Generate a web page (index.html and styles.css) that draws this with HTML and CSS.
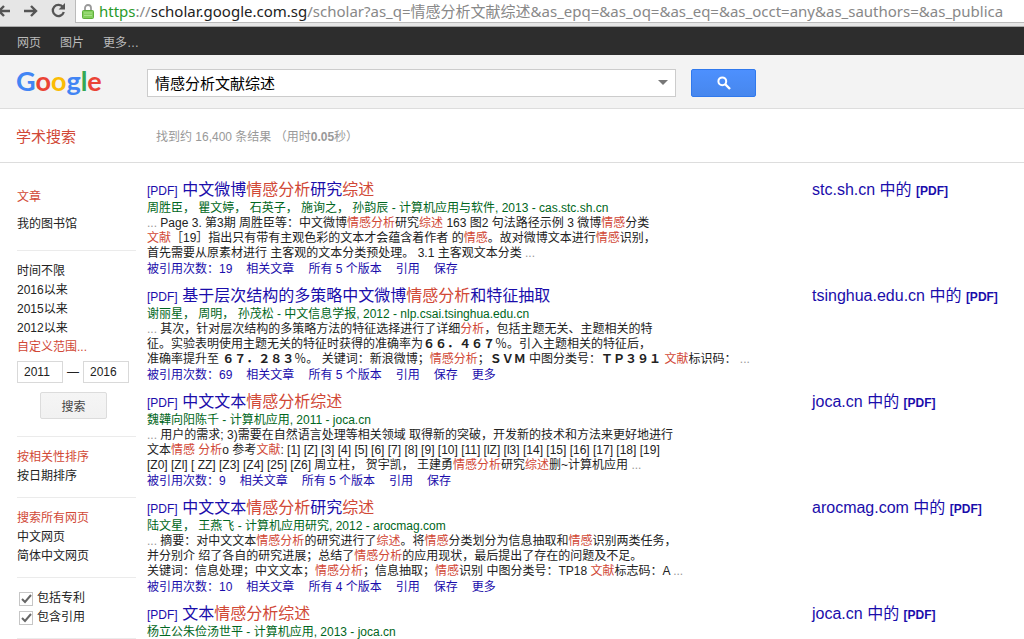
FILE: index.html
```
<!DOCTYPE html>
<html lang="zh-CN">
<head>
<meta charset="UTF-8">
<title>情感分析文献综述 - Google 学术搜索</title>
<link rel="stylesheet" href="styles.css">
</head>
<body>

<div class="browser">
    <button class="nav-btn back" aria-label="后退">
        <svg width="14" height="14" viewBox="0 0 14 14"><path d="M13 7H2M7 2L2 7l5 5" fill="none" stroke="#555" stroke-width="2.4"/></svg>
    </button>
    <button class="nav-btn" aria-label="前进">
        <svg width="14" height="14" viewBox="0 0 14 14"><path d="M0 7h12M7 2l5 5-5 5" fill="none" stroke="#555" stroke-width="2.4"/></svg>
    </button>
    <button class="nav-btn" aria-label="刷新">
        <svg width="15" height="15" viewBox="0 0 15 15"><path d="M12 4.2A5.6 5.6 0 1 0 12.8 9" fill="none" stroke="#555" stroke-width="2.3"/><path d="M14 0v6.6H7.6z" fill="#555"/></svg>
    </button>
    <div class="address">
        <svg class="lock" width="12" height="15" viewBox="0 0 12 15"><path d="M3 7V4a3 3 0 0 1 6 0v3" fill="none" stroke="#999" stroke-width="1.8"/><rect x="0.5" y="6.5" width="11" height="8" rx="1" fill="#83cf5c" stroke="#5fae3c"/><path d="M2 9h8M2 11.500h8" stroke="#a9e28a"/></svg>
        <span class="url"><span class="secure">https</span>://<span class="host">scholar.google.com.sg</span>/scholar?as_q=情感分析文献综述&amp;as_epq=&amp;as_oq=&amp;as_eq=&amp;as_occt=any&amp;as_sauthors=&amp;as_publica</span>
    </div>
</div>

<nav class="topbar">
    <a href="#">网页</a>
    <a href="#">图片</a>
    <a href="#">更多…</a>
</nav>

<header class="header">
    <a class="logo" href="#" aria-label="Google"><span class="b">G</span><span class="r">o</span><span class="y">o</span><span class="b">g</span><span class="g">l</span><span class="r">e</span></a>
    <form class="search" onsubmit="return false">
        <div class="search-box">
            <input type="text" aria-label="搜索" value="情感分析文献综述">
            <button type="button" class="drop" aria-label="高级搜索"><svg width="10" height="5" viewBox="0 0 10 5"><path d="M0 0h10L5 5z" fill="#777"/></svg></button>
        </div>
        <button class="search-btn" aria-label="搜索">
            <svg width="14" height="14" viewBox="0 0 14 14"><circle cx="5.300" cy="5.300" r="3.900" fill="none" stroke="#fff" stroke-width="2"/><path d="M8 8l5 5" stroke="#fff" stroke-width="2.4"/></svg>
        </button>
    </form>
</header>

<div class="subbar">
    <a class="product" href="#">学术搜索</a>
    <div class="stats">找到约 16,400 条结果 （用时<b>0.05</b>秒）</div>
</div>

<div class="content">
    <aside class="sidebar">
        <section>
            <a class="active" href="#">文章</a>
            <a class="library" href="#">我的图书馆</a>
        </section>
        <section>
            <a href="#">时间不限</a>
            <a href="#">2016以来</a>
            <a href="#">2015以来</a>
            <a href="#">2012以来</a>
            <a class="active" href="#">自定义范围...</a>
            <form class="range" onsubmit="return false">
                <div class="years">
                    <input type="text" aria-label="起始年份" value="2011">
                    <span>—</span>
                    <input type="text" aria-label="结束年份" value="2016">
                </div>
                <button>搜索</button>
            </form>
        </section>
        <section>
            <a class="active" href="#">按相关性排序</a>
            <a href="#">按日期排序</a>
        </section>
        <section>
            <a class="active" href="#">搜索所有网页</a>
            <a href="#">中文网页</a>
            <a href="#">简体中文网页</a>
        </section>
        <section>
            <label><input type="checkbox" checked>包括专利</label>
            <label><input type="checkbox" checked>包含引用</label>
        </section>
    </aside>

    <main class="results">
        <article class="result">
            <div class="body">
                <h3><span class="type">[PDF]</span> <a href="#">中文微博<em>情感分析</em>研究<em>综述</em></a></h3>
                <div class="authors">周胜臣， 瞿文婷， 石英子， 施询之， 孙韵辰 - 计算机应用与软件, 2013 - cas.stc.sh.cn</div>
                <div class="snippet">
                    <i>...</i> Page 3. 第3期 周胜臣等：中文微博<em>情感分析</em>研究<em>综述</em> 163 图2 句法路径示例 3 微博<em>情感</em>分类<br>
                    <em>文献</em>［19］指出只有带有主观色彩的文本才会蕴含着作者 的<em>情感</em>。故对微博文本进行<em>情感</em>识别，<br>
                    首先需要从原素材进行 主客观的文本分类预处理。 3.1 主客观文本分类 <i>...</i>
                </div>
                <div class="links"><a href="#">被引用次数：19</a><a href="#">相关文章</a><a href="#">所有 5 个版本</a><a href="#">引用</a><a href="#">保存</a></div>
            </div>
            <a class="source" href="#">stc.sh.cn 中的 <b>[PDF]</b></a>
        </article>

        <article class="result">
            <div class="body">
                <h3><span class="type">[PDF]</span> <a href="#">基于层次结构的多策略中文微博<em>情感分析</em>和特征抽取</a></h3>
                <div class="authors">谢丽星， 周明， 孙茂松 - 中文信息学报, 2012 - nlp.csai.tsinghua.edu.cn</div>
                <div class="snippet">
                    <i>...</i> 其次，针对层次结构的多策略方法的特征选择进行了详细<em>分析</em>，包括主题无关、主题相关的特<br>
                    征。实验表明使用主题无关的特征时获得的准确率为<b>６６．４６７</b>％。引入主题相关的特征后，<br>
                    准确率提升至 <b>６７．２８３</b>％。 关键词：新浪微博；<em>情感分析</em>；<b>ＳＶＭ</b> 中图分类号：<b>ＴＰ３９１</b> <em>文献</em>标识码： <i>...</i>
                </div>
                <div class="links"><a href="#">被引用次数：69</a><a href="#">相关文章</a><a href="#">所有 5 个版本</a><a href="#">引用</a><a href="#">保存</a><a href="#">更多</a></div>
            </div>
            <a class="source" href="#">tsinghua.edu.cn 中的 <b>[PDF]</b></a>
        </article>

        <article class="result">
            <div class="body">
                <h3><span class="type">[PDF]</span> <a href="#">中文文本<em>情感分析综述</em></a></h3>
                <div class="authors">魏韡向阳陈千 - 计算机应用, 2011 - joca.cn</div>
                <div class="snippet">
                    <i>...</i> 用户的需求; 3)需要在自然语言处理等相关领域 取得新的突破，开发新的技术和方法来更好地进行<br>
                    文本<em>情感 分析</em>o 参考<em>文献</em>: [1] [Z] [3] [4] [5] [6] [7] [8] [9] [10] [11] [lZ] [l3] [14] [15] [16] [17] [18] [19]<br>
                    [Z0] [Zl] [ ZZ] [Z3] [Z4] [25] [Z6] 周立柱， 贺宇凯， 王建勇<em>情感分析</em>研究<em>综述</em>删~计算机应用 <i>...</i>
                </div>
                <div class="links"><a href="#">被引用次数：9</a><a href="#">相关文章</a><a href="#">所有 5 个版本</a><a href="#">引用</a><a href="#">保存</a></div>
            </div>
            <a class="source" href="#">joca.cn 中的 <b>[PDF]</b></a>
        </article>

        <article class="result">
            <div class="body">
                <h3><span class="type">[PDF]</span> <a href="#">中文文本<em>情感分析</em>研究<em>综述</em></a></h3>
                <div class="authors">陆文星， 王燕飞 - 计算机应用研究, 2012 - arocmag.com</div>
                <div class="snippet">
                    <i>...</i> 摘要：对中文文本<em>情感分析</em>的研究进行了<em>综述</em>。将<em>情感</em>分类划分为信息抽取和<em>情感</em>识别两类任务，<br>
                    并分别介 绍了各自的研究进展；总结了<em>情感分析</em>的应用现状，最后提出了存在的问题及不足。<br>
                    关键词：信息处理；中文文本；<em>情感分析</em>；信息抽取；<em>情感</em>识别 中图分类号：TP18 <em>文献</em>标志码：A <i>...</i>
                </div>
                <div class="links"><a href="#">被引用次数：10</a><a href="#">相关文章</a><a href="#">所有 4 个版本</a><a href="#">引用</a><a href="#">保存</a><a href="#">更多</a></div>
            </div>
            <a class="source" href="#">arocmag.com 中的 <b>[PDF]</b></a>
        </article>

        <article class="result">
            <div class="body">
                <h3><span class="type">[PDF]</span> <a href="#">文本<em>情感分析综述</em></a></h3>
                <div class="authors">杨立公朱俭汤世平 - 计算机应用, 2013 - joca.cn</div>
            </div>
            <a class="source" href="#">joca.cn 中的 <b>[PDF]</b></a>
        </article>
    </main>
</div>

</body>
</html>
```
FILE: styles.css
```
* {
    box-sizing: border-box;
}

html {
    overflow-x: hidden;
}

body {
    margin: 0;
    background: #fff;
    color: #222;
    font-family: "Liberation Sans", "Noto Sans CJK SC", sans-serif;
    font-size: 12px;
}

a {
    color: inherit;
    text-decoration: none;
}

a:hover {
    text-decoration: underline;
}

em, i {
    font-style: normal;
}

em {
    color: #d14836;
}

button, input {
    font-family: inherit;
    font-size: inherit;
    margin: 0;
}

/* browser toolbar */
.browser {
    display: flex;
    align-items: flex-start;
    height: 27px;
    background: #e6e6e6;
    border-bottom: 1px solid #aaa;
}

.nav-btn {
    display: flex;
    align-items: center;
    width: 27px;
    height: 21px;
    padding: 0;
    border: 0;
    background: none;
}

.nav-btn.back {
    width: 24px;
}

.nav-btn.back svg {
    margin-left: -3px;
}

.address {
    flex: 1;
    min-width: 0;
    display: flex;
    align-items: center;
    gap: 5px;
    height: 23px;
    margin-left: -3px;
    padding-left: 6px;
    overflow: hidden;
    background: #fff;
    border-left: 1px solid #bbb;
    border-bottom: 1px solid #bbb;
}

.lock {
    flex: none;
}

.url {
    color: #888;
    font-family: "Noto Sans", "Noto Sans CJK SC", sans-serif;
    font-size: 15px;
    line-height: 22px;
    white-space: nowrap;
}

.secure {
    color: #2a9a2a;
}

.host {
    color: #222;
}

/* black bar */
.topbar {
    display: flex;
    align-items: center;
    gap: 19px;
    height: 28px;
    padding-left: 17px;
    background: #2d2d2d;
    color: #bbb;
}

.header {
    display: flex;
    align-items: center;
    height: 54px;
    padding-top: 2px;
    background: #f3f3f3;
    border-bottom: 1px solid #ddd;
}

.logo {
    width: 147px;
    padding: 0 0 4px 16px;
    font-family: Lato, sans-serif;
    font-size: 27px;
    font-weight: bold;
    line-height: 32px;
}

.b { color: #4285f4; }
.r { color: #ea4335; }
.y { color: #fbbc05; }
.g { color: #34a853; }

.search {
    flex: 1;
    display: flex;
    gap: 15px;
    padding-right: 268px;
}

.search-box {
    flex: 1;
    display: flex;
    height: 28px;
    background: #fff;
    border: 1px solid #ccc;
}

.search-box input {
    flex: 1;
    min-width: 0;
    padding: 0 7px;
    border: 0;
    background: none;
    color: #000;
    font-size: 15px;
}

.drop {
    display: flex;
    align-items: center;
    justify-content: center;
    width: 24px;
    padding: 0;
    border: 0;
    background: none;
}

.search-btn {
    display: flex;
    align-items: center;
    justify-content: center;
    width: 65px;
    height: 28px;
    padding: 0;
    border: 1px solid #3079ed;
    border-radius: 2px;
    background: linear-gradient(#4d90fe, #4787ed);
}

.subbar {
    display: flex;
    align-items: center;
    height: 54px;
    border-bottom: 1px solid #ddd;
}

.product {
    width: 156px;
    padding-left: 16px;
    color: #d14836;
    font-size: 15px;
}

.stats {
    color: #999;
}

.content {
    display: flex;
}

/* left column */
.sidebar {
    width: 147px;
    padding: 14px 11px 0 17px;
    color: #222;
}

.sidebar section {
    padding: 11px 0;
    border-bottom: 1px solid #ebebeb;
}

.sidebar section > a {
    display: block;
    line-height: 19px;
}

.sidebar .active {
    color: #d14836;
}

.sidebar .library {
    margin: 8px 0 5px;
}

.range {
    padding: 4px 0 6px;
}

.years {
    display: flex;
    align-items: center;
    gap: 4px;
    margin-bottom: 9px;
}

.years input {
    width: 46px;
    height: 22px;
    padding: 0 6px;
    border: 1px solid #d9d9d9;
    color: #222;
}

.range button {
    display: block;
    width: 67px;
    height: 27px;
    margin-left: 23px;
    border: 1px solid #dcdcdc;
    border-radius: 2px;
    background: linear-gradient(#f5f5f5, #f1f1f1);
    color: #444;
}

.sidebar label {
    display: flex;
    align-items: center;
    gap: 4px;
    padding-left: 2px;
    line-height: 19px;
}

.sidebar input[type="checkbox"] {
    appearance: none;
    width: 14px;
    height: 14px;
    border: 1px solid #c6c6c6;
    background: url("data:image/svg+xml,%3Csvg xmlns='http://www.w3.org/2000/svg' viewBox='0 0 12 12'%3E%3Cpath d='M2 6l3 3 6-7' fill='none' stroke='%23666' stroke-width='2'/%3E%3C/svg%3E") center no-repeat;
}

/* result list */
.results {
    flex: 1;
    min-width: 0;
    padding-top: 17px;
}

.result {
    display: flex;
    margin-bottom: 9px;
    white-space: nowrap;
}

.result:last-child {
    margin-bottom: 0;
}

.body {
    flex: 1;
    min-width: 0;
}

.result h3 {
    margin: 0;
    color: #1a0dab;
    font-size: 16px;
    font-weight: normal;
    line-height: 20px;
}

.type {
    font-size: 12px;
    line-height: 1;
}

.authors {
    color: #006621;
    line-height: 16px;
}

.snippet {
    line-height: 15px;
}

.snippet i {
    color: #999;
}

.links {
    display: flex;
    gap: 14px;
    color: #1a0dab;
    line-height: 16px;
}

.source {
    width: 212px;
    color: #1a0dab;
    font-size: 16px;
    line-height: 20px;
}

.source b {
    font-size: 12px;
    line-height: 1;
}
```
